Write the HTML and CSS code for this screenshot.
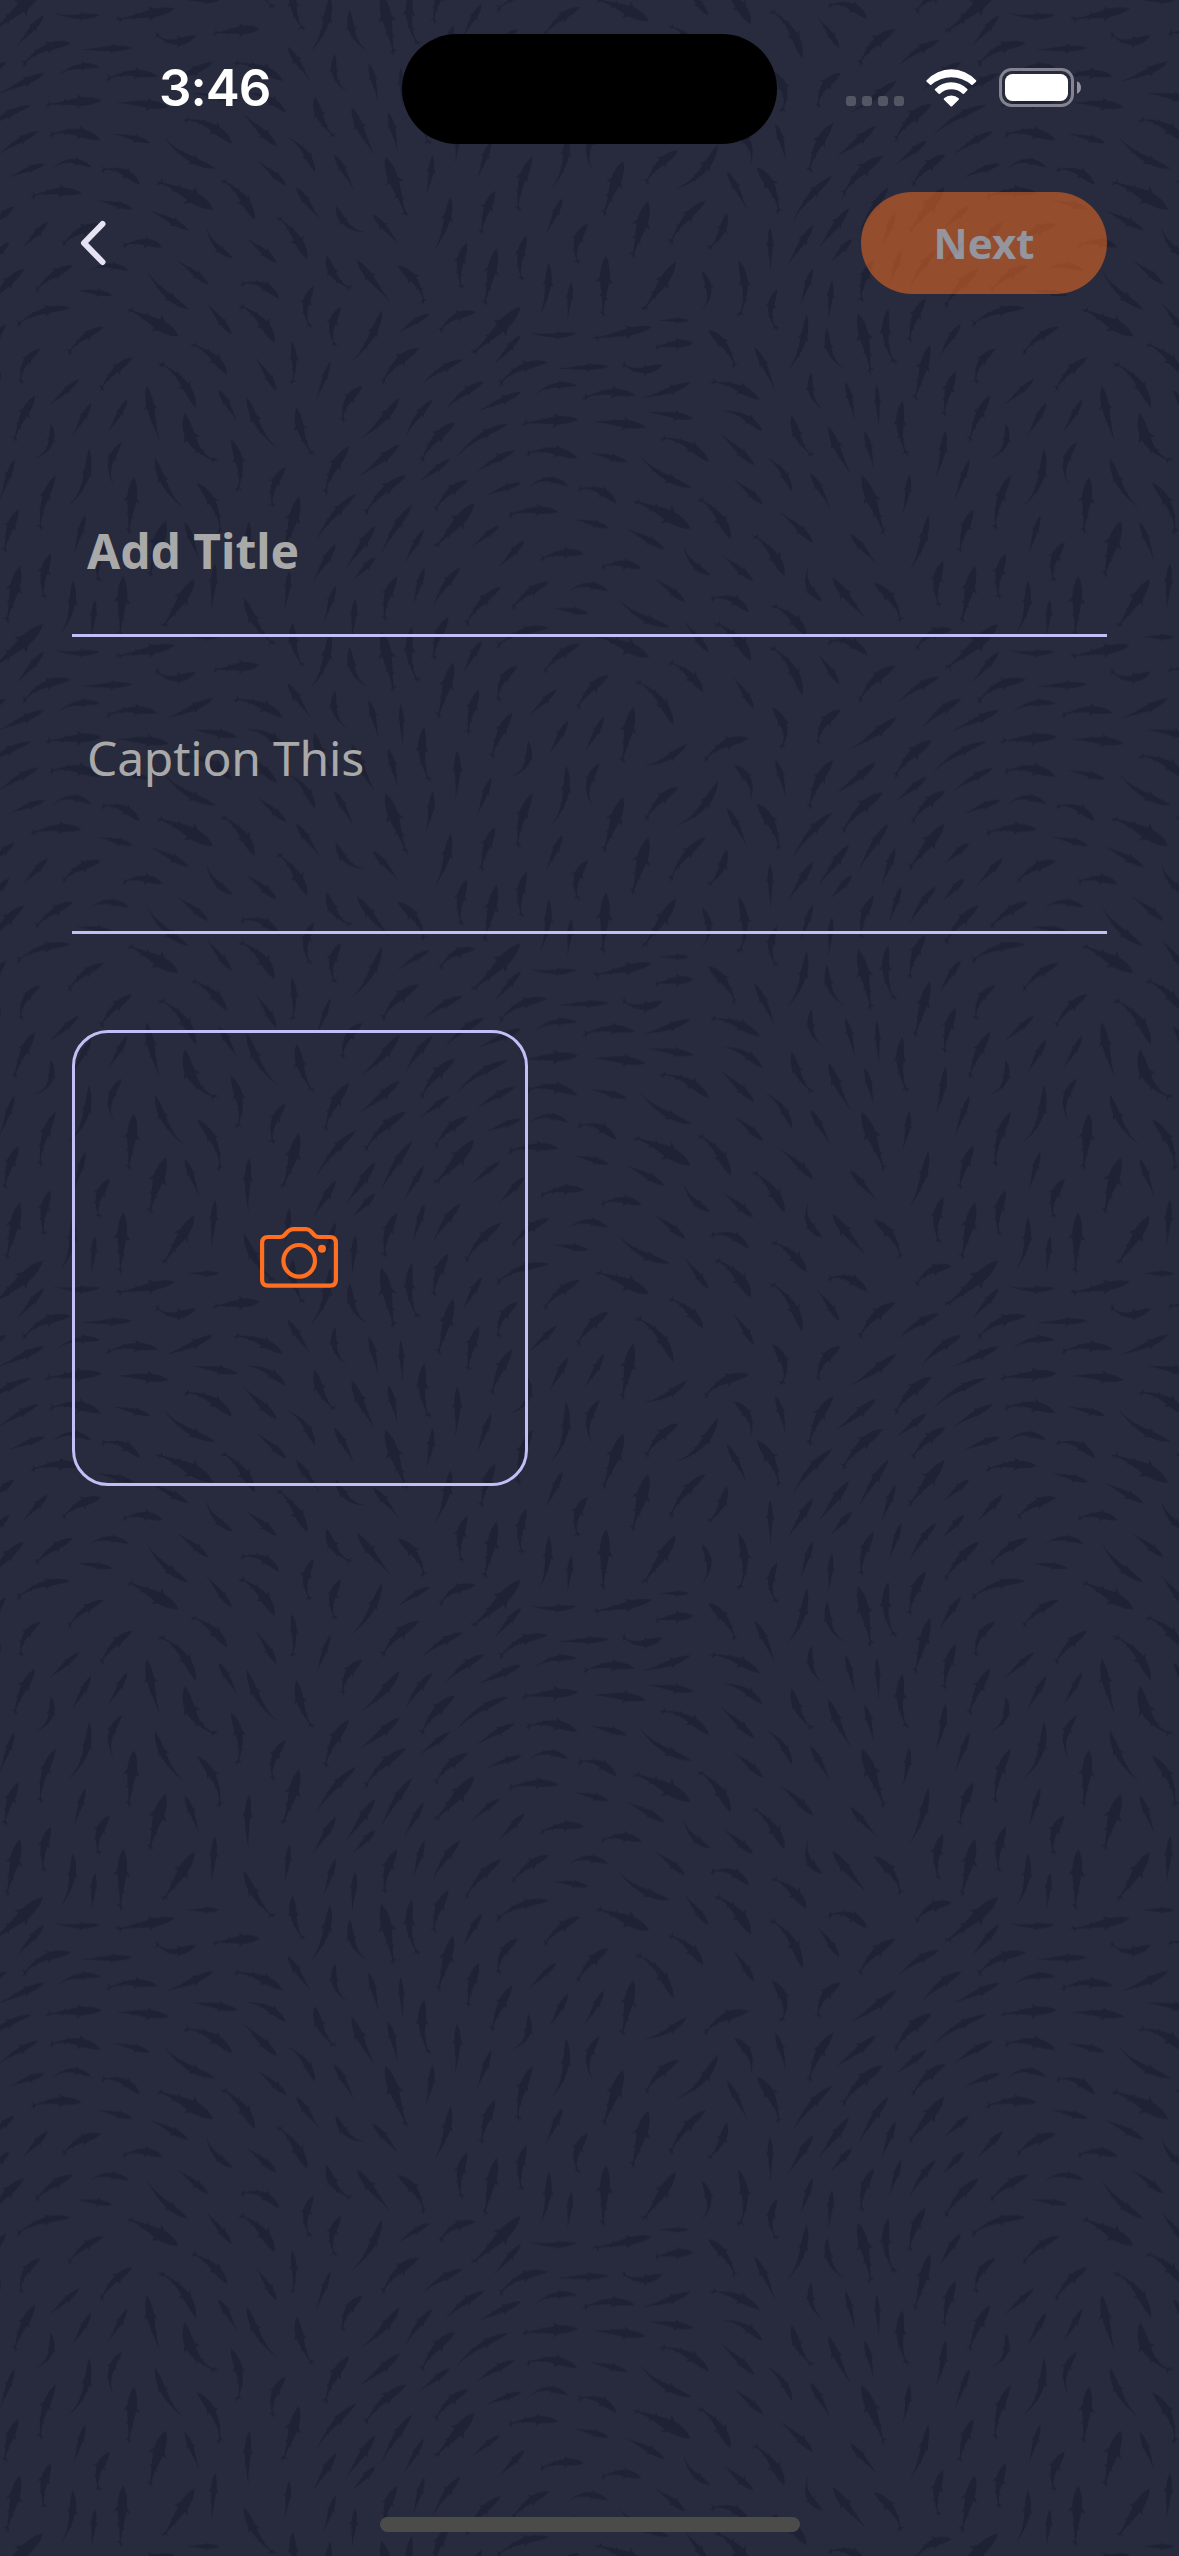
FILE: index.html
```html
<!DOCTYPE html>
<html lang="en">
<head>
<meta charset="utf-8">
<meta name="viewport" content="width=device-width, initial-scale=1">
<title>New post</title>
<link rel="stylesheet" href="styles.css">
</head>
<body>
<svg class="backdrop" width="1179" height="2556" aria-hidden="true">
  <defs>
    <pattern id="shoal" width="2865" height="1909.5" patternUnits="userSpaceOnUse" patternTransform="translate(0 247) scale(0.33333)"></pattern>
  </defs>
  <rect width="1179" height="2556" fill="url(#shoal)"/>
</svg>
<div class="screen">
  <header class="status">
    <div class="status-side"><span class="clock">3:46</span></div>
    <div class="island"></div>
    <div class="status-side status-icons">
      <div class="cell"><i></i><i></i><i></i><i></i></div>
      <svg class="wifi" width="51" height="38" viewBox="378 146 153 114" fill="#fff">
        <path d="M380 180A99.5 99.5 0 0 1 528 180Q530 182 528 184L518 193Q516 195 514 193A92 92 0 0 0 394 193Q392 195 390 193L380 184Q378 182 380 180Z"/>
        <path d="M405 206A68 68 0 0 1 502 206Q504 208 502 210L492 220Q490 222 488 220A51 51 0 0 0 420 220Q418 222 416 220L405 210Q403 208 405 206Z"/>
        <path d="M432 234A32 32 0 0 1 476 234Q478 236 476 238L457 257Q454 260 451 257L432 238Q430 236 432 234Z"/>
      </svg>
      <svg class="battery" width="82" height="39" viewBox="0 0 82 39">
        <rect x="1.5" y="1.5" width="72" height="36" rx="11" fill="none" stroke="#83848f" stroke-width="3"/>
        <rect x="6" y="6" width="63" height="27" rx="7.5" fill="#fff"/>
        <path d="M78 13.2Q82 15 82 19.5T78 25.8Z" fill="#93949e"/>
      </svg>
    </div>
  </header>
  <nav class="toolbar">
    <button class="back" aria-label="Back">
      <svg width="26" height="46" viewBox="0 0 26 46" fill="none" stroke="#e5e3f3" stroke-width="6" stroke-linecap="round" stroke-linejoin="round"><path d="M22.500 4L4 23L22.500 42"/></svg>
    </button>
    <button class="next">Next</button>
  </nav>
  <main class="form">
    <div class="field title">Add Title</div>
    <div class="field caption">Caption This</div>
    <button class="photo" aria-label="Add photo">
      <svg width="78" height="61" viewBox="0 0 78 61" fill="none" stroke="#ff6f1f" stroke-width="4.200" stroke-linejoin="round">
        <path d="M8 10H20Q22.500 10 24.300 8.200L28 4.300Q30.200 2.200 33 2.200H46Q48.700 2.200 50.800 4.300L54.500 8.200Q56.300 10 59 10H70Q75.900 10 75.900 16V53Q75.900 58.600 70 58.600H8Q2.100 58.600 2.100 53V16Q2.100 10 8 10Z"/>
        <circle cx="39.200" cy="33.800" r="15.800"/>
        <circle cx="62" cy="21.800" r="4" fill="#ff6f1f" stroke="none"/>
      </svg>
    </button>
  </main>
  <div class="home"></div>
</div>
<script src="shoal.js"></script>
</body>
</html>
```
FILE: styles.css
```css
* { box-sizing: border-box; }
body {
  margin: 0;
  background: #282b3d;
  font-family: "Noto Sans", sans-serif;
}
button {
  margin: 0;
  padding: 0;
  border: 0;
  background: none;
  font: inherit;
  display: flex;
  align-items: center;
  justify-content: center;
}
svg { display: block; }
.backdrop {
  position: absolute;
  inset: 0;
  z-index: -1;
}
.screen {
  width: 1179px;
  height: 2556px;
  display: flex;
  flex-direction: column;
  overflow: hidden;
}
.status {
  height: 177px;
  padding-top: 34px;
  display: grid;
  grid-template-columns: 402px 375px 402px;
  align-items: start;
}
.status-side { height: 110px; }
.clock {
  display: block;
  padding: 23px 0 0 159px;
  font: 600 51px/62px Inter, sans-serif;
  color: #fff;
  letter-spacing: -1px;
}
.island {
  height: 110px;
  border-radius: 55px;
  background: #000;
}
.status-icons {
  display: flex;
  align-items: flex-start;
  padding: 34px 0 0 69px;
}
.cell {
  display: flex;
  gap: 6px;
  padding-top: 28px;
}
.cell i {
  width: 10px;
  height: 10px;
  border-radius: 3px;
  background: #545664;
}
.wifi { margin: 1px 0 0 22px; }
.battery { margin-left: 22px; }
.toolbar {
  height: 117px;
  padding: 15px 72px 0 80px;
  display: flex;
  align-items: center;
  justify-content: space-between;
}
.next {
  width: 246px;
  height: 102px;
  padding-bottom: 2px;
  border-radius: 51px;
  background: #ff6f1f;
  color: #fff;
  font-size: 42px;
  font-weight: 700;
  opacity: 0.5;
}
.form {
  flex: 1;
  padding: 0 72px;
}
.field {
  border-bottom: 3px solid #c1bff5;
  padding-left: 15px;
  font-size: 48px;
  line-height: 66px;
  color: #a9a9a9;
}
.title {
  height: 343px;
  padding-top: 224px;
  font-weight: 700;
}
.caption {
  height: 297px;
  padding-top: 88px;
  letter-spacing: -0.2px;
}
.photo {
  width: 456px;
  height: 456px;
  margin-top: 96px;
  padding: 0 2px 1px 0;
  border: 3px solid #c1bff5;
  border-radius: 36px;
}
.home {
  width: 420px;
  height: 15px;
  margin: 0 auto 24px;
  border-radius: 8px;
  background: #4b4b4a;
}
```
FILE: shoal.js
```js
// Each entry: nose x, nose y, tail x, tail y, bend, girth, forked tail.
// Quadrants are offset by [x, y] within the tile.
const quadrants = [
  [0, 0, `72 66 -32 185 10 24 1;220 55 104 135 10 22 1;388 72 268 74 18 16 0;338 145 228 130 2 16 0;212 183 45 240 18 20 1;312 239 202 325 12 20 1;122 305 65 415 22 20 1;398 332 300 435 12 22 1;238 396 148 474 0 16 0;106 445 42 588 8 24 1;274 468 218 566 0 17 0;382 456 324 554 -2 16 0;152 528 105 633 -25 17 0;267 604 205 776 -22 20 0;367 585 340 712 22 19 0;402 690 385 865 0 30 1;168 684 122 855 14 22 1;44 636 0 755 0 16 0;56 787 14 920 8 24 1;256 804 222 918 0 16 0;330 886 300 1008 20 24 1;153 920 135 1060 14 24 1;498 822 448 995 4 34 1;440 415 478 578 4 24 0;555 497 660 645 32 32 1;465 632 550 782 14 20 0;590 706 658 868 -22 22 1;692 577 708 740 -20 24 1;554 826 596 938 -2 17 0;536 268 378 184 4 34 1;566 188 442 72 -12 20 0;626 113 534 42 2 18 0;696 263 620 168 0 18 0;838 156 716 115 24 22 1;824 288 712 174 18 28 1;682 383 570 290 14 24 1;588 484 470 346 22 24 1;700 34 620 -57 -14 18 0;830 48 740 -25 2 20 0;922 38 828 -93 12 26 1;830 432 768 334 2 18 0;655 428 710 522 -2 18 0;740 448 830 602 14 20 0;890 480 942 628 12 24 1;875 282 875 415 -8 17 1;992 343 948 460 0 14 0;942 116 935 246 22 22 1;1024 178 1010 303 22 22 1;980 25 1060 126 20 24 1;1070 38 1170 162 2 22 0;1192 55 1272 175 -18 24 1;1146 188 1054 342 -14 20 0;1290 200 1194 260 4 16 0;1428 196 1318 260 20 22 1;1258 303 1145 415 16 26 1;1390 337 1268 410 8 18 0;1088 418 1030 530 20 24 1;1199 452 1085 572 -8 22 0;1298 457 1218 565 6 19 0;1048 598 976 748 14 26 1;1200 591 1080 686 -2 22 0;1366 526 1262 650 14 26 1;1350 635 1258 704 0 16 0;1220 684 1092 808 14 24 1;1406 699 1304 796 14 22 1;858 660 822 786 20 22 1;897 748 845 918 -4 30 1;1070 740 950 878 10 20 0;748 822 745 985 4 20 0;1008 890 940 1000 0 20 0;1126 836 1040 960 0 22 0;1237 773 1145 918 6 20 0;1272 846 1212 950 0 16 0;1423 768 1300 905 -2 32 1;1126 930 1060 998 0 18 0;645 948 635 1088 0 18 0;1402 -13 1388 130 16 24 1;1454 403 1338 487 8 20 0;18 230 -45 325 2 18 0;2 373 -32 512 8 24 1;28 -16 -37 52 0 18 0`],
  [1440, 0, `50 3 12 180 0 28 1;140 -35 128 106 14 22 1;206 46 180 203 -10 20 0;274 106 263 215 0 16 0;378 26 368 215 0 30 1;588 45 485 195 -2 28 1;122 178 -30 325 -4 34 1;124 262 42 353 0 17 0;290 259 148 256 -8 16 0;516 239 335 275 -2 24 1;628 220 536 220 0 13 0;204 346 55 420 22 22 1;388 358 235 365 0 17 0;548 352 422 345 -22 22 1;640 288 522 303 4 24 1;292 416 165 442 14 17 0;466 445 304 458 16 22 1;632 406 488 452 -4 20 0;125 434 -5 492 0 20 0;295 517 122 530 2 26 1;498 540 340 525 4 24 0;642 515 506 496 2 20 0;840 460 686 405 14 24 1;848 554 730 492 14 20 0;87 530 -70 630 14 18 0;293 635 132 625 20 24 1;442 645 330 618 2 17 0;688 646 535 574 20 24 1;636 722 482 628 -14 20 0;824 655 722 560 0 20 0;106 610 -10 675 4 18 0;266 718 148 720 22 16 0;126 707 18 745 2 16 0;410 770 288 730 22 22 1;632 846 455 760 8 36 1;237 795 80 808 12 22 1;388 843 282 817 2 17 0;555 907 440 846 2 19 0;752 877 650 752 16 26 1;850 773 762 698 2 18 0;936 734 856 630 14 18 0;1000 888 900 797 4 20 0;60 835 -25 902 2 15 0;134 880 58 958 0 18 0;313 920 176 940 12 22 1;485 965 360 965 16 22 1;692 985 612 900 -14 18 0;820 1002 732 928 0 20 0;914 988 815 862 14 26 1;1110 860 1190 950 0 18 0;1345 803 1290 968 -10 20 0;1390 940 1380 1084 16 24 1;1288 682 1268 798 -4 17 0;1145 685 1215 868 -2 32 1;990 678 1050 782 -2 18 0;1396 550 1366 692 -6 19 0;1154 553 1180 662 -2 17 0;1045 537 1112 680 4 22 0;935 505 1002 630 14 22 1;1268 460 1285 630 16 24 1;1190 412 1197 540 0 14 0;1096 404 1124 518 -2 16 0;995 376 1030 488 20 17 0;1350 292 1302 465 0 26 1;1225 184 1250 355 20 22 1;1134 198 1173 385 -4 30 1;1042 243 1092 365 20 18 0;980 202 922 370 -16 20 0;823 300 884 430 -4 18 0;684 248 766 366 -14 24 1;1056 100 1046 216 0 16 0;892 127 895 252 22 20 1;775 38 772 215 -22 22 1;665 72 666 190 -22 18 0;998 64 962 172 0 16 0;1182 36 1146 170 14 22 1;1337 154 1290 290 12 24 1;1264 8 1228 115 0 16 0;1370 8 1290 120 6 18 0;870 -60 872 72 0 16 0;1000 -66 925 50 0 20 0;1116 -25 1052 45 0 18 0;324 -70 298 55 22 24 1;505 -138 455 38 0 34 1;740 -102 680 8 -14 22 1`],
  [0, 960, `60 -4 18 172 0 30 1;218 40 185 195 -14 20 0;285 98 275 208 0 16 0;370 26 360 215 0 30 1;584 35 485 185 -2 30 1;130 170 -35 310 -4 34 1;132 254 52 345 0 18 0;300 253 162 248 -8 16 0;525 234 342 268 -2 26 1;658 210 562 210 0 15 0;214 338 65 412 22 24 1;398 352 245 358 0 18 0;588 314 462 304 -26 22 1;780 295 635 310 2 26 1;302 410 175 434 14 17 0;474 438 314 450 16 22 1;640 393 498 453 -4 20 0;850 452 696 398 14 24 1;134 428 -5 490 0 20 0;306 510 132 524 2 26 1;508 530 350 518 4 24 0;714 510 578 488 2 20 0;858 547 740 488 14 20 0;96 523 -65 615 12 18 0;303 630 142 618 20 26 1;452 637 340 610 2 17 0;697 640 545 568 20 26 1;648 715 494 622 -14 20 0;832 648 732 553 0 22 0;116 602 -5 672 4 18 0;276 712 158 714 22 16 0;136 700 28 740 2 17 0;420 764 298 722 22 22 1;640 838 465 752 8 36 1;246 788 88 802 12 24 1;400 836 292 810 2 17 0;567 900 450 840 2 19 0;764 868 660 746 16 26 1;860 766 772 692 2 18 0;945 726 864 622 14 19 0;43 828 -30 890 2 18 0;144 873 68 952 0 18 0;304 882 185 948 14 24 1;488 950 364 950 16 22 1;888 770 958 865 0 19 0;1007 825 1095 905 20 19 0;1118 852 1194 940 -2 18 0;1352 798 1305 955 -10 22 0;1156 678 1222 865 0 32 1;1002 672 1060 776 -2 18 0;1298 674 1278 792 -4 18 0;1371 550 1366 695 -4 20 0;1164 545 1192 660 -2 18 0;1055 530 1122 670 4 24 0;944 498 1008 622 14 24 1;1273 478 1292 648 16 24 1;1202 410 1208 534 0 14 0;1106 398 1134 512 -2 17 0;1006 370 1040 482 20 18 0;1360 286 1312 458 0 28 1;862 348 930 450 0 19 0;1236 178 1260 350 20 22 1;1144 192 1182 378 -2 32 1;1050 238 1102 360 20 20 0;990 194 932 362 -16 22 0;878 166 914 302 14 22 1;732 92 828 236 14 22 1;868 12 854 125 -2 16 0;1066 95 1056 212 0 17 0;1007 56 972 165 0 16 0;1192 28 1156 165 14 24 1;1346 150 1302 282 12 24 1;1273 2 1240 110 0 17 0;1382 0 1300 115 6 20 0;1446 220 1390 318 2 18 0;1437 368 1405 505 8 24 1`],
  [1440, 960, `64 58 -45 180 12 22 1;208 45 94 130 12 22 1;384 72 268 72 18 18 0;326 140 218 124 2 17 0;208 182 45 245 18 20 1;300 230 190 320 12 22 1;114 296 58 408 22 22 1;387 324 290 430 12 24 1;230 367 148 444 0 16 0;97 436 34 578 8 24 1;264 462 210 558 0 18 0;372 450 314 552 -2 17 0;144 521 95 628 -25 18 0;258 594 215 772 -20 20 0;360 588 336 716 22 20 0;430 690 368 860 0 32 1;158 678 116 848 14 24 1;34 630 -8 745 0 17 0;46 780 4 915 8 24 1;248 803 198 910 0 18 0;460 420 425 592 0 30 1;580 476 460 340 22 24 1;508 272 343 205 6 32 1;570 180 418 98 -14 20 0;616 106 526 36 2 19 0;686 256 614 164 0 18 0;807 136 686 100 24 22 1;812 283 700 167 18 30 1;670 376 562 284 14 24 1;822 425 760 330 2 18 0;1028 102 985 0 -22 20 0;980 207 872 114 14 26 1;1162 265 1038 230 24 24 1;967 386 864 236 22 24 1;1078 352 1014 262 2 18 0;1057 32 1156 153 2 24 0;1181 48 1262 170 -18 24 1;1416 188 1306 252 20 24 1;1247 296 1136 410 16 26 1;1378 330 1258 404 8 20 0;1445 395 1330 480 8 22 0;876 422 900 550 -26 24 1;1083 428 1016 538 22 26 1;1250 450 1114 545 -4 22 0;1356 520 1243 636 14 28 1;622 530 492 596 -12 18 0;808 514 670 588 20 26 1;1060 578 988 732 14 26 1;1188 586 1070 678 -2 22 0;1340 630 1250 700 0 18 0;1210 676 1085 802 14 28 1;1397 672 1295 770 12 24 1;596 660 496 765 14 24 1;714 642 590 774 -20 22 0;762 594 812 700 -20 22 0;886 578 916 690 -4 17 0;830 710 896 855 -16 28 1;740 722 800 838 -3 17 0;1058 736 940 870 10 20 0;1227 768 1137 908 4 20 0;1393 770 1283 910 0 30 1;1246 844 1206 950 0 18 0;1107 832 1018 950 0 22 0;678 810 568 948 14 22 1`]
];
const TILE_W = 2865;
const TILE_H = 1909.5;

// Half-width of the body along its length, as a share of the girth.
const profile = [[0, 0], [0.06, 0.2], [0.14, 0.38], [0.25, 0.48], [0.36, 0.5], [0.5, 0.38], [0.64, 0.25], [0.78, 0.14], [0.88, 0.09], [1, 0.03]];

function polygon(points) {
  let area = 0;
  points.forEach((p, i) => {
    const q = points[(i + 1) % points.length];
    area += p[0] * q[1] - q[0] * p[1];
  });
  const ordered = area < 0 ? points.slice().reverse() : points;
  return "M" + ordered.map(p => p[0].toFixed(1) + " " + p[1].toFixed(1)).join("L") + "Z";
}

function shark(x0, y0, x1, y1, bend, girth, forked) {
  const len = Math.hypot(x1 - x0, y1 - y0);
  const nx = -(y1 - y0) / len, ny = (x1 - x0) / len;
  const cx = (x0 + x1) / 2 + nx * bend * 2 + (x1 - x0) * 0.08;
  const cy = (y0 + y1) / 2 + ny * bend * 2 + (y1 - y0) * 0.08;
  // Point at distance t along the spine, pushed sideways by s.
  const at = (t, s) => {
    const u = 1 - t;
    const px = u * u * x0 + 2 * u * t * cx + t * t * x1;
    const py = u * u * y0 + 2 * u * t * cy + t * t * y1;
    const dx = u * (cx - x0) + t * (x1 - cx), dy = u * (cy - y0) + t * (y1 - cy);
    const d = Math.hypot(dx, dy);
    return [px - dy / d * s, py + dx / d * s];
  };
  const left = profile.map(([t, w]) => at(t * (forked ? 0.93 : 1), w * girth));
  const right = profile.map(([t, w]) => at(t * (forked ? 0.93 : 1), -w * girth)).reverse();
  let d = polygon(left.concat(right));
  const g = girth;
  d += polygon([at(0.25, 0.3 * g), at(0.39, 0.88 * g), at(0.36, 0.3 * g)]);
  d += polygon([at(0.27, -0.3 * g), at(0.41, -0.88 * g), at(0.38, -0.3 * g)]);
  d += polygon([at(0.52, 0.1 * g), at(0.61, 0.5 * g), at(0.6, 0.1 * g)]);
  d += polygon([at(0.58, -0.1 * g), at(0.67, -0.42 * g), at(0.66, -0.1 * g)]);
  if (forked) {
    const side = bend < 0 ? -1 : 1;
    d += polygon([at(0.82, 0), at(0.9, 3 * side), at(1, -2 * side), at(0.9, -3 * side)]);
    d += polygon([at(0.83, -2 * side), at(0.91, 14 * side), at(0.89, -2 * side)]);
    d += polygon([at(0.83, 2 * side), at(0.96, -12 * side), at(0.9, 2 * side)]);
  }
  return d;
}

let tile = "";
for (const [ox, oy, list] of quadrants) {
  for (const row of list.split(";")) {
    const [x0, y0, x1, y1, bend, girth, forked] = row.trim().split(" ").map(Number);
    for (const wx of [-TILE_W, 0, TILE_W]) {
      for (const wy of [-TILE_H, 0, TILE_H]) {
        const ax = x0 + ox + wx, ay = y0 + oy + wy;
        if (ax < -220 || ax > TILE_W + 220 || ay < -220 || ay > TILE_H + 220) continue;
        tile += shark(ax, ay, x1 + ox + wx, y1 + oy + wy, bend, girth, forked);
      }
    }
  }
}
const path = document.createElementNS("http://www.w3.org/2000/svg", "path");
path.setAttribute("d", tile);
path.setAttribute("fill", "#1f2234");
document.getElementById("shoal").appendChild(path);
```
